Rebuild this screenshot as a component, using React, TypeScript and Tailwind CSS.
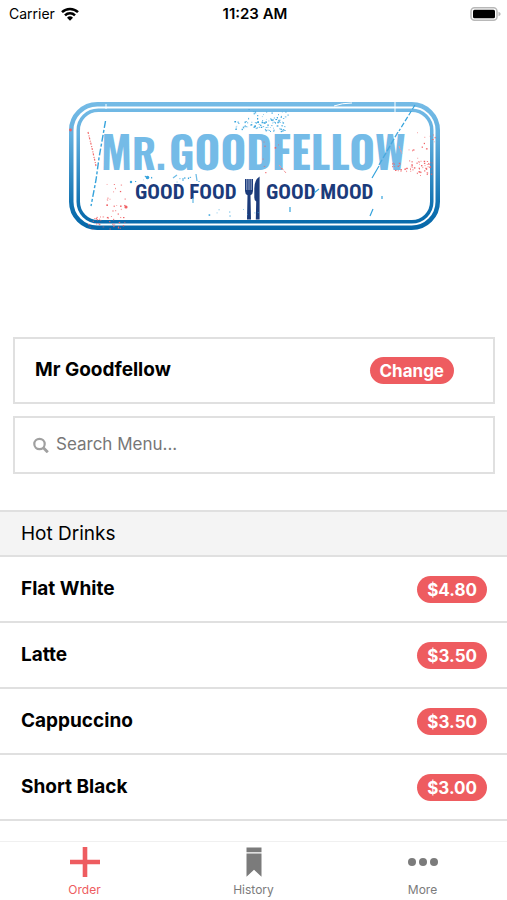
import React from "react";

interface MenuItem {
  name: string;
  price: string;
}

interface Speck {
  x: number;
  y: number;
  w: number;
  h: number;
}

const hotDrinks: MenuItem[] = [
  { name: "Flat White", price: "$4.80" },
  { name: "Latte", price: "$3.50" },
  { name: "Cappuccino", price: "$3.50" },
  { name: "Short Black", price: "$3.00" },
];

// Paint specks for the worn look of the logo, seeded so they never move
const makeSpecks = (
  seed: number,
  count: number,
  x: number,
  y: number,
  width: number,
  height: number
): Speck[] => {
  let s = seed * 7919;
  const next = () => {
    s = (s * 16807) % 2147483647;
    return s / 2147483647;
  };
  return Array.from({ length: count }, () => ({
    x: x + next() * width,
    y: y + next() * height,
    w: 0.5 + next() * 1.2,
    h: 0.5 + next() * 1.1,
  }));
};

const blueSpecks = [
  ...makeSpecks(71, 56, 260, 118, 25, 13),
  ...makeSpecks(37, 32, 234, 120, 26, 9),
  ...makeSpecks(19, 22, 248, 109, 42, 10),
  ...makeSpecks(43, 10, 130, 174, 70, 9),
  ...makeSpecks(97, 9, 208, 206, 50, 10),
];

const redSpecks = [
  ...makeSpecks(31, 34, 88, 216, 38, 13),
  ...makeSpecks(57, 20, 106, 182, 22, 34),
  ...makeSpecks(83, 36, 416, 160, 16, 15),
  ...makeSpecks(61, 28, 392, 161, 24, 11),
  ...makeSpecks(11, 16, 408, 132, 32, 30),
  ...makeSpecks(29, 8, 262, 140, 24, 36),
];

const Specks: React.FC<{ specks: Speck[] }> = ({ specks }) => (
  <>
    {specks.map((p, i) => (
      <rect key={i} x={p.x} y={p.y} width={p.w} height={p.h} />
    ))}
  </>
);

const Logo: React.FC = () => (
  <svg
    viewBox="67 100 374 132"
    className="w-full max-w-[374px]"
    role="img"
    aria-label="Mr. Goodfellow, good food good mood"
  >
    <defs>
      <linearGradient id="ring" gradientUnits="userSpaceOnUse" x1="0" y1="102" x2="0" y2="230">
        <stop offset="0" stopColor="#75bbe6" />
        <stop offset="0.25" stopColor="#64b0df" />
        <stop offset="0.8" stopColor="#1172b1" />
        <stop offset="1" stopColor="#0567a9" />
      </linearGradient>
    </defs>

    {/* Double frame */}
    <g fill="none" stroke="url(#ring)">
      <rect x="71.25" y="104.25" width="366.5" height="123.5" rx="26" strokeWidth="4.5" />
      <rect x="78.25" y="110.25" width="353.5" height="111.5" rx="20" strokeWidth="3.5" />
    </g>

    {/* Lettering */}
    <g fill="#74bbe7" fontFamily="Oswald, 'Roboto Condensed', Roboto, sans-serif" fontWeight="700">
      <text x="101" y="170" fontSize="44">
        M<tspan fontSize="40">R.</tspan>
      </text>
      <text x="169" y="170" fontSize="44">
        GOODFELLOW
      </text>
    </g>
    <g
      fill="#1b3b7b"
      fontFamily="'Roboto Condensed', Roboto, sans-serif"
      fontWeight="700"
      fontSize="21"
    >
      <text x="135" y="199">GOOD FOOD</text>
      <text x="266" y="199">GOOD MOOD</text>
    </g>

    {/* Fork and knife */}
    <path d="M245 179h8v12q0 3-2.500 4.300l.5 24.200h-4l.5-24.200q-2.500-1.300-2.500-4.300z" fill="#1b3b7b" />
    <path d="M246.800 179v11M249 179v11M251.200 179v11" stroke="#a9b8d6" strokeWidth="0.900" />
    <path d="M259.600 176.500v43h-3.800l.4-18q-1.900-1-1.900-4v-9q0-8.500 5.300-12z" fill="#1b3b7b" />

    {/* Scratches */}
    <g fill="none" strokeLinecap="butt">
      <path d="M105.500 121L99 158l-3 22-5 26" stroke="#35a3dc" strokeWidth="1.400" strokeDasharray="7 2 3 2" />
      <path d="M88 132l4 16 4 18" stroke="#f26b6b" strokeWidth="1.200" strokeDasharray="2 1.500 1 1" />
      <path d="M415 105l-16 26" stroke="#35a3dc" strokeWidth="1.200" strokeDasharray="5 2" />
      <path d="M398 132l-19 33" stroke="#4aa9de" strokeWidth="1.400" strokeDasharray="6 2" />
      <path d="M379 166l-7 12M373 209l-3 7M319 189l-5 4M290 207v5M382 196v3" stroke="#35a3dc" strokeWidth="1.200" />
      <path d="M173 178l4-3M183 178v3M196 174l1 7M193 198v5" stroke="#6fbde6" strokeWidth="1.300" />
      <path d="M279 165l7 8M399 146l3 8" stroke="#f49a9c" strokeWidth="1" strokeDasharray="3 1" />
      <path d="M334 106q8-3 18-3M395 101v13M106 104v5" stroke="#fff" strokeWidth="1" />
    </g>
    <g fill="#35a3dc">
      <Specks specks={blueSpecks} />
      <circle cx="147.500" cy="177.500" r="1.800" />
      <circle cx="131" cy="182" r="1.200" />
    </g>
    <g fill="#f05f63">
      <Specks specks={redSpecks} />
      <circle cx="126" cy="207" r="1.600" />
      <circle cx="70.500" cy="130" r="1.400" />
    </g>
  </svg>
);

const StatusBar: React.FC = () => (
  <header className="grid h-7 shrink-0 grid-cols-3 items-center pr-1.5 pl-[9px] text-sm">
    <div className="flex items-center gap-1.5">
      <span>Carrier</span>
      <svg viewBox="0 0 18 14" className="h-3.5 w-[18px]" aria-hidden="true">
        <g fill="none" stroke="#000" strokeWidth="2.500">
          <path d="M1 5.200a11.400 11.400 0 0 1 16 0" />
          <path d="M4 8.300a7.100 7.100 0 0 1 10 0" />
        </g>
        <path d="M9 13.700L6 10.700a4.300 4.300 0 0 1 6 0z" />
      </svg>
    </div>
    <time className="text-center text-[15px] font-semibold">11:23 AM</time>
    <svg viewBox="0 0 31 15" className="h-[15px] w-[31px] justify-self-end" aria-label="Battery full">
      <rect x="1" y="0.750" width="26" height="12.500" rx="3.500" fill="#fff" stroke="#b8b8b8" strokeWidth="1.500" />
      <rect x="3" y="2.750" width="22" height="8.500" rx="1.500" />
      <path d="M28.500 4.700q2.200.8 2.200 2.300t-2.200 2.300z" fill="#b8b8b8" />
    </svg>
  </header>
);

const TabBar: React.FC = () => (
  <nav className="grid h-[59px] shrink-0 grid-cols-3 border-t border-[#f0f0f0] bg-white text-xs text-[#7b7b7b]">
    <a href="#order" className="flex flex-col items-center gap-[5px] pt-[5px] text-[#ee5c60]">
      <svg viewBox="0 0 30 30" className="size-[30px]" aria-hidden="true">
        <path d="M15 0v30M0 15h30" stroke="currentColor" strokeWidth="4.600" />
      </svg>
      <span>Order</span>
    </a>
    <a href="#history" className="flex flex-col items-center gap-[5px] pt-[5px]">
      <svg viewBox="0 0 30 30" className="size-[30px]" fill="currentColor" aria-hidden="true">
        <path d="M7.500 0.500h15v4.700h-15zM7.500 6.500h15V29.700L15 22.700 7.500 29.700z" />
      </svg>
      <span>History</span>
    </a>
    <a href="#more" className="flex flex-col items-center gap-[5px] pt-[5px]">
      <svg viewBox="0 0 30 30" className="size-[30px]" fill="currentColor" aria-hidden="true">
        <circle cx="4" cy="15" r="4" />
        <circle cx="15" cy="15" r="4" />
        <circle cx="26" cy="15" r="4" />
      </svg>
      <span>More</span>
    </a>
  </nav>
);

const App: React.FC = () => {
  return (
    <div className="flex h-screen flex-col bg-white font-['Inter',sans-serif] text-black">
      <StatusBar />

      <main className="min-h-0 flex-1 overflow-hidden">
        <div className="flex justify-center px-4 pt-[72px] pb-[105px]">
          <Logo />
        </div>

        <div className="flex flex-col gap-3 pr-3 pl-[13px]">
          <section className="flex h-[67px] items-center justify-between border-2 border-[#e0e0e0] pr-[39px] pl-5">
            <h1 className="text-[19px] font-bold">Mr Goodfellow</h1>
            <button
              type="button"
              className="h-[27px] rounded-full bg-[#ee5c60] px-2.5 pt-px text-[17px] leading-[27px] font-bold text-white"
            >
              Change
            </button>
          </section>

          <label className="flex h-[58px] items-center gap-[7px] border-2 border-[#e0e0e0] px-[18px]">
            <svg viewBox="0 0 16 16" className="size-4 shrink-0" aria-hidden="true">
              <circle cx="6.500" cy="7" r="5.200" fill="none" stroke="#a0a0a0" strokeWidth="2.200" />
              <path d="M10.300 10.800l4.500 4.500" stroke="#a0a0a0" strokeWidth="2.800" />
            </svg>
            <input
              type="text"
              aria-label="Search Menu"
              placeholder="Search Menu..."
              className="w-full text-[17px] outline-none placeholder:text-[#777777]"
            />
          </label>
        </div>

        <section className="mt-9">
          <h2 className="flex h-[47px] items-center border-y-2 border-[#e0e0e0] bg-[#f4f4f4] px-[21px] pt-0.5 text-[19px]">
            Hot Drinks
          </h2>
          <ul>
            {hotDrinks.map((item) => (
              <li
                key={item.name}
                className="flex h-[66px] items-center justify-between border-b-2 border-[#e0e0e0] pr-5 pl-[21px]"
              >
                <span className="text-[19px] font-bold">{item.name}</span>
                <button
                  type="button"
                  className="h-[27px] rounded-full bg-[#ee5c60] px-2.5 pt-px text-[17px] leading-[27px] font-bold text-white"
                >
                  {item.price}
                </button>
              </li>
            ))}
          </ul>
        </section>
      </main>

      <TabBar />
    </div>
  );
};

export default App;
